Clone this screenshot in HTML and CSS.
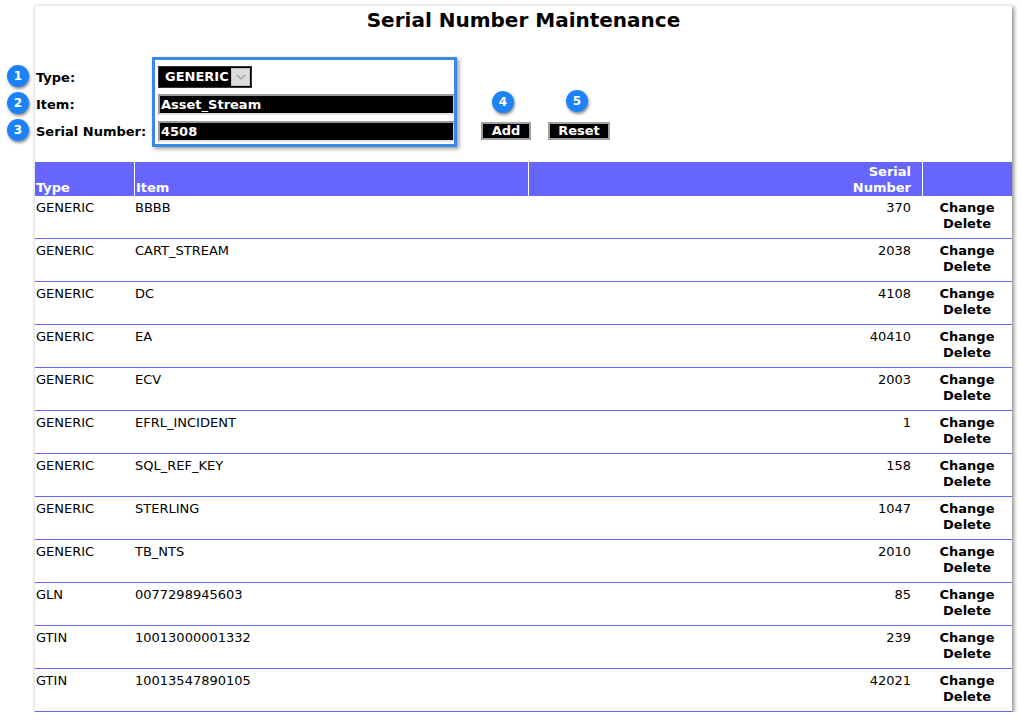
FILE: index.html
```html
<!DOCTYPE html>
<html lang="en">
  <head>
    <meta charset="UTF-8" />
    <title>Serial Number Maintenance</title>
    <link rel="stylesheet" href="styles.css">
  </head>
  <body>
    <div class="page">
      <h1 class="title">Serial Number Maintenance</h1>

      <form class="entry" action="">
        <div class="row">
          <label class="lbl">Type:</label>
          <div class="pick">
            <span class="pick-value">GENERIC</span>
            <span class="pick-arrow">
              <svg width="10" height="6" viewBox="0 0 10 6"><path d="M1 1 L5 5 L9 1" fill="none" stroke="#9a9a9a" stroke-width="1.2"/></svg>
            </span>
          </div>
        </div>
        <div class="row">
          <label class="lbl">Item:</label>
          <input class="field" type="text" name="item" value="Asset_Stream" />
        </div>
        <div class="row">
          <label class="lbl">Serial Number:</label>
          <input class="field" type="text" name="serial" value="4508" />
          <button type="button" class="btn btn-add">Add</button>
          <button type="reset" class="btn btn-reset">Reset</button>
        </div>
      </form>

      <table class="grid">
        <tr>
          <th class="c-type">Type</th>
          <th class="c-item">Item</th>
          <th class="c-serial">Serial<br>Number</th>
          <th class="c-act"></th>
        </tr>
        <tr><td class="c-type">GENERIC</td><td class="c-item">BBBB</td><td class="c-serial">370</td><td class="c-act">Change<br>Delete</td></tr>
        <tr><td class="c-type">GENERIC</td><td class="c-item">CART_STREAM</td><td class="c-serial">2038</td><td class="c-act">Change<br>Delete</td></tr>
        <tr><td class="c-type">GENERIC</td><td class="c-item">DC</td><td class="c-serial">4108</td><td class="c-act">Change<br>Delete</td></tr>
        <tr><td class="c-type">GENERIC</td><td class="c-item">EA</td><td class="c-serial">40410</td><td class="c-act">Change<br>Delete</td></tr>
        <tr><td class="c-type">GENERIC</td><td class="c-item">ECV</td><td class="c-serial">2003</td><td class="c-act">Change<br>Delete</td></tr>
        <tr><td class="c-type">GENERIC</td><td class="c-item">EFRL_INCIDENT</td><td class="c-serial">1</td><td class="c-act">Change<br>Delete</td></tr>
        <tr><td class="c-type">GENERIC</td><td class="c-item">SQL_REF_KEY</td><td class="c-serial">158</td><td class="c-act">Change<br>Delete</td></tr>
        <tr><td class="c-type">GENERIC</td><td class="c-item">STERLING</td><td class="c-serial">1047</td><td class="c-act">Change<br>Delete</td></tr>
        <tr><td class="c-type">GENERIC</td><td class="c-item">TB_NTS</td><td class="c-serial">2010</td><td class="c-act">Change<br>Delete</td></tr>
        <tr><td class="c-type">GLN</td><td class="c-item">0077298945603</td><td class="c-serial">85</td><td class="c-act">Change<br>Delete</td></tr>
        <tr><td class="c-type">GTIN</td><td class="c-item">10013000001332</td><td class="c-serial">239</td><td class="c-act">Change<br>Delete</td></tr>
        <tr><td class="c-type">GTIN</td><td class="c-item">10013547890105</td><td class="c-serial">42021</td><td class="c-act">Change<br>Delete</td></tr>
      </table>
    </div>

    <!-- callouts -->
    <div class="callout-box"></div>
    <span class="badge b1">1</span>
    <span class="badge b2">2</span>
    <span class="badge b3">3</span>
    <span class="badge b4">4</span>
    <span class="badge b5">5</span>
  </body>
</html>
```

FILE: styles.css
```css
html,
body {
  margin: 0;
  background: #fff;
  font-family: "DejaVu Sans", Verdana, sans-serif;
  font-size: 13px;
  color: #000;
}

.page {
  position: relative;
  width: 977px;
  margin: 5px 0 0 34px;
  border-top: 1px solid #e6e6e6;
  border-left: 1px solid #e6e6e6;
  box-shadow: 2px 2px 4px rgba(0, 0, 0, 0.45);
  background: #fff;
}

.title {
  margin: 0;
  padding-top: 2px;
  font-size: 20px;
  line-height: 24px;
  text-align: center;
}

.entry {
  display: flex;
  flex-direction: column;
  gap: 5px;
  margin: 34px 0 0 1px;
}

.row {
  display: flex;
  align-items: center;
  height: 22px;
}

.lbl {
  width: 122px;
  font-weight: bold;
}

.pick {
  display: flex;
  align-items: stretch;
  width: 92px;
  height: 20px;
  border: 1px solid #333;
  background: #000;
}

.pick-value {
  flex: 1;
  padding-left: 6px;
  color: #fff;
  font-weight: bold;
  line-height: 20px;
}

.pick-arrow {
  display: flex;
  align-items: center;
  justify-content: center;
  width: 17px;
  margin: 1px 1px 1px 0;
  background: #dcdcdc;
  border: 1px solid #c4c4c4;
}

.field {
  width: 291px;
  height: 17px;
  padding: 0 1px;
  margin: 0;
  border: 2px solid #9a9a9a;
  border-right-color: #c8c8c8;
  border-bottom-color: #e2e2e2;
  background: #000;
  color: #fff;
  font-family: "DejaVu Sans", Verdana, sans-serif;
  font-size: 13px;
  font-weight: bold;
}

.btn {
  height: 18px;
  padding: 0;
  border: 2px solid #a0a0a0;
  background: #000;
  color: #fff;
  font-family: "DejaVu Sans", Verdana, sans-serif;
  font-size: 13px;
  font-weight: bold;
  line-height: 14px;
}

.btn-add {
  width: 50px;
  margin-left: 26px;
}

.btn-reset {
  width: 62px;
  margin-left: 17px;
}

.grid {
  width: 977px;
  margin-top: 20px;
  border-collapse: separate;
  border-spacing: 0;
}

.grid th {
  height: 32px;
  padding: 2px 1px 0 1px;
  background: #6666ff;
  color: #fff;
  font-weight: bold;
  text-align: left;
  vertical-align: bottom;
  line-height: 16px;
  border-left: 1px solid #fff;
}

.grid th:first-child {
  border-left: none;
}

.grid td {
  padding: 4px 1px 6px 1px;
  line-height: 16px;
  vertical-align: top;
  border-bottom: 1px solid #6666ff;
}

.grid .c-type {
  width: 97px;
}

.c-item {
  width: 391px;
}

.grid .c-serial {
  width: 381px;
  padding-right: 11px;
  text-align: right;
}

.grid .c-act {
  width: 87px;
  text-align: center;
  font-weight: bold;
}

.callout-box {
  position: absolute;
  left: 152px;
  top: 57px;
  width: 299px;
  height: 84px;
  border: 3px solid #3a8ae4;
  box-shadow: 2px 2px 4px rgba(0, 0, 0, 0.4);
}

.badge {
  position: absolute;
  width: 22px;
  height: 22px;
  border-radius: 50%;
  background: #1b82f7;
  color: #fff;
  font-weight: bold;
  font-size: 12px;
  line-height: 22px;
  text-align: center;
  box-shadow: 1px 2px 3px rgba(0, 0, 0, 0.45);
}

.b1 { left: 7px; top: 65px; }
.b2 { left: 7px; top: 92px; }
.b3 { left: 7px; top: 119px; }
.b4 { left: 492px; top: 91px; }
.b5 { left: 566px; top: 90px; }
```
